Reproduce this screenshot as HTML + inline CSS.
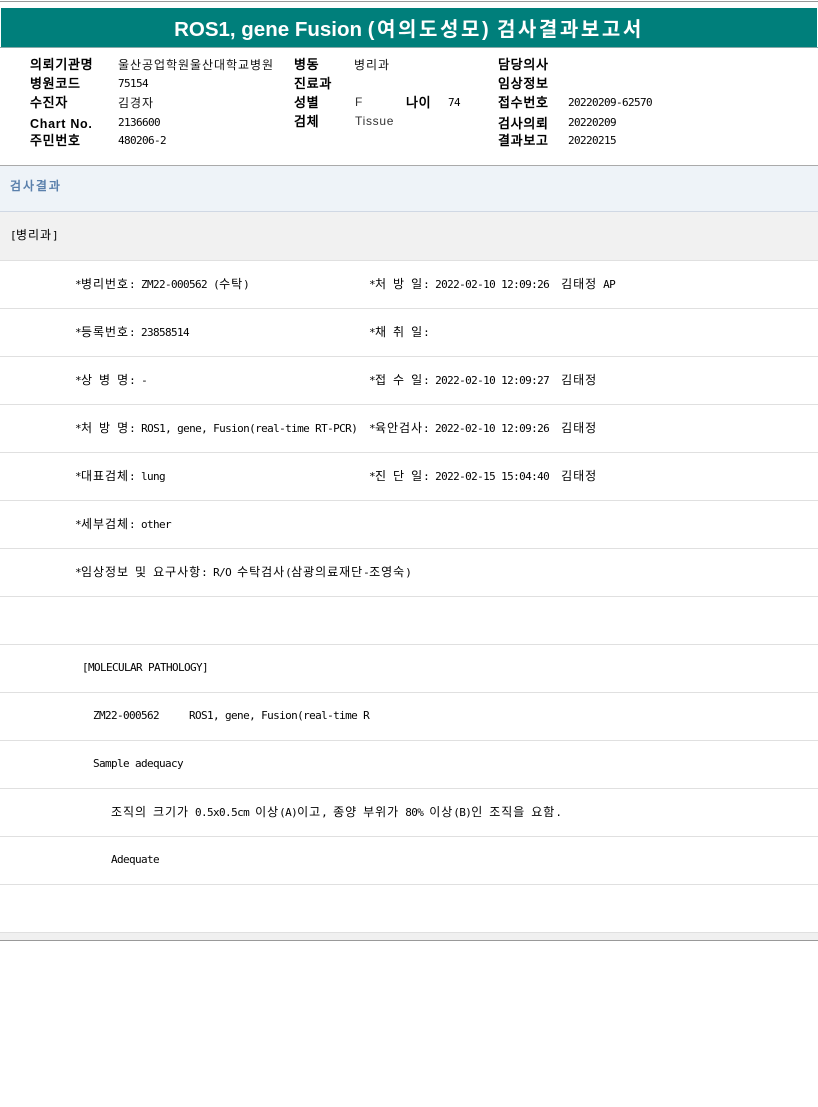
<!DOCTYPE html>
<html lang="ko"><head><meta charset="utf-8"><title>ROS1, gene Fusion 검사결과보고서</title>
<style>
html,body{margin:0;padding:0;background:#fff}
body{position:relative;width:818px;height:1107px;overflow:hidden}
div{position:absolute;box-sizing:border-box}
.title{left:1px;top:8px;width:816px;height:39px;background:#007f7b;color:#fff;text-align:center;font:bold 20.5px/44px "Liberation Sans","Noto Sans CJK KR",sans-serif;letter-spacing:0}
.title span{font-weight:700;font-size:20px;letter-spacing:2.6px}
.h{font:bold 13px/16px "WenQuanYi Zen Hei","Liberation Sans",sans-serif;letter-spacing:.7px;color:#000;white-space:pre}
.en{font:bold 12.5px/16px "Liberation Sans",sans-serif;letter-spacing:.7px}
.v{font:12px/16px "WenQuanYi Zen Hei",sans-serif;letter-spacing:.96px;color:#111;white-space:pre}
.n{font:11px/16px "DejaVu Sans Mono",monospace;letter-spacing:-.62px;color:#000;white-space:pre}
.p{font:12px/16px "Liberation Sans",sans-serif;letter-spacing:.7px;color:#333;white-space:pre}
.r{left:0;width:818px;height:49px;border-bottom:1px solid #e0e0e0}
.t{height:16px;font:11px/16px "DejaVu Sans Mono",monospace;letter-spacing:-.62px;color:#000;white-space:pre}
k{font-family:"WenQuanYi Zen Hei","Noto Sans CJK KR",sans-serif;font-size:12px;letter-spacing:.96px}
</style></head><body>
<div style="left:0;top:1px;width:818px;height:1px;background:#999"></div>
<div class="title">ROS1, gene Fusion <span>(여의도성모)</span> <span>검사결과보고서</span></div>
<div style="left:0;top:47px;width:818px;height:1px;background:#8aa"></div>

<div class="h" style="left:30px;top:57px">의뢰기관명</div>
<div class="v" style="left:118px;top:57px">울산공업학원울산대학교병원</div>
<div class="h" style="left:294px;top:57px">병동</div>
<div class="v" style="left:354px;top:57px">병리과</div>
<div class="h" style="left:498px;top:57px">담당의사</div>

<div class="h" style="left:30px;top:76px">병원코드</div>
<div class="n" style="left:118px;top:76px">75154</div>
<div class="h" style="left:294px;top:76px">진료과</div>
<div class="h" style="left:498px;top:76px">임상정보</div>

<div class="h" style="left:30px;top:95px">수진자</div>
<div class="v" style="left:118px;top:95px">김경자</div>
<div class="h" style="left:294px;top:95px">성별</div>
<div class="p" style="left:355px;top:94px">F</div>
<div class="h" style="left:406px;top:95px">나이</div>
<div class="n" style="left:448px;top:95px">74</div>
<div class="h" style="left:498px;top:95px">접수번호</div>
<div class="n" style="left:568px;top:95px">20220209-62570</div>

<div class="h en" style="left:30px;top:116px">Chart No.</div>
<div class="n" style="left:118px;top:115px">2136600</div>
<div class="h" style="left:294px;top:114px">검체</div>
<div class="p" style="left:355px;top:113px">Tissue</div>
<div class="h" style="left:498px;top:116px">검사의뢰</div>
<div class="n" style="left:568px;top:115px">20220209</div>

<div class="h" style="left:30px;top:133px">주민번호</div>
<div class="n" style="left:118px;top:133px">480206-2</div>
<div class="h" style="left:498px;top:133px">결과보고</div>
<div class="n" style="left:568px;top:133px">20220215</div>

<div style="left:0;top:165px;width:818px;height:1px;background:#aaa"></div>
<div style="left:0;top:166px;width:818px;height:46px;background:#eef3f8;border-bottom:1px solid #d0d8e4"></div>
<div class="h" style="left:10px;top:178px;color:#5a80ac;font-size:12px;letter-spacing:1.9px">검사결과</div>
<div style="left:0;top:212px;width:818px;height:49px;background:#f1f1f1;border-bottom:1px solid #e0e0e0"></div>
<div class="t" style="left:10px;top:227px">[<k>병리과</k>]</div>

<div class="r" style="top:260px"></div>
<div class="r" style="top:308px"></div>
<div class="r" style="top:356px"></div>
<div class="r" style="top:404px"></div>
<div class="r" style="top:452px"></div>
<div class="r" style="top:500px"></div>
<div class="r" style="top:548px"></div>
<div class="r" style="top:596px"></div>
<div class="r" style="top:644px"></div>
<div class="r" style="top:692px"></div>
<div class="r" style="top:740px"></div>
<div class="r" style="top:788px"></div>
<div class="r" style="top:836px"></div>
<div class="r" style="top:884px"></div>

<div class="t" style="left:75px;top:276px">*<k>병리번호</k>: ZM22-000562 (<k>수탁</k>)</div>
<div class="t" style="left:369px;top:276px">*<k>처</k> <k>방</k> <k>일</k>: 2022-02-10 12:09:26  <k>김태정</k> AP</div>
<div class="t" style="left:75px;top:324px">*<k>등록번호</k>: 23858514</div>
<div class="t" style="left:369px;top:324px">*<k>채</k> <k>취</k> <k>일</k>:</div>
<div class="t" style="left:75px;top:372px">*<k>상</k> <k>병</k> <k>명</k>: -</div>
<div class="t" style="left:369px;top:372px">*<k>접</k> <k>수</k> <k>일</k>: 2022-02-10 12:09:27  <k>김태정</k></div>
<div class="t" style="left:75px;top:420px">*<k>처</k> <k>방</k> <k>명</k>: ROS1, gene, Fusion(real-time RT-PCR)</div>
<div class="t" style="left:369px;top:420px">*<k>육안검사</k>: 2022-02-10 12:09:26  <k>김태정</k></div>
<div class="t" style="left:75px;top:468px">*<k>대표검체</k>: lung</div>
<div class="t" style="left:369px;top:468px">*<k>진</k> <k>단</k> <k>일</k>: 2022-02-15 15:04:40  <k>김태정</k></div>
<div class="t" style="left:75px;top:516px">*<k>세부검체</k>: other</div>
<div class="t" style="left:75px;top:564px">*<k>임상정보</k> <k>및</k> <k>요구사항</k>: R/O <k>수탁검사</k>(<k>삼광의료재단</k>-<k>조영숙</k>)</div>
<div class="t" style="left:82px;top:660px">[MOLECULAR PATHOLOGY]</div>
<div class="t" style="left:93px;top:708px">ZM22-000562     ROS1, gene, Fusion(real-time R</div>
<div class="t" style="left:93px;top:756px">Sample adequacy</div>
<div class="t" style="left:111px;top:804px"><k>조직의</k> <k>크기가</k> 0.5x0.5cm <k>이상</k>(A)<k>이고</k>, <k>종양</k> <k>부위가</k> 80% <k>이상</k>(B)<k>인</k> <k>조직을</k> <k>요함</k>.</div>
<div class="t" style="left:111px;top:852px">Adequate</div>

<div style="left:0;top:932px;width:818px;height:1px;background:#e0e0e0"></div>
<div style="left:0;top:933px;width:818px;height:7px;background:#f0f0f0"></div>
<div style="left:0;top:940px;width:818px;height:1px;background:#999"></div>
</body></html>
